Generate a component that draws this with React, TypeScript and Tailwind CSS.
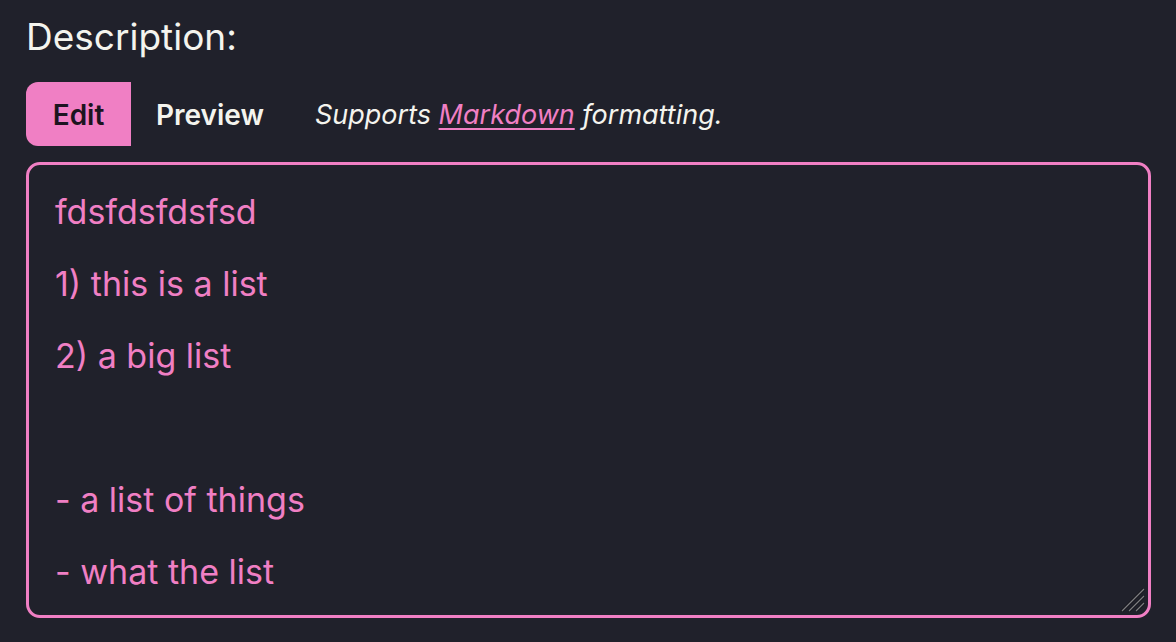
export default function App() {
  const text = "fdsfdsfdsfsd\n\n1) this is a list\n\n2) a big list\n\n\n\n- a list of things\n\n- what the list";
  return (
    <div className="min-h-[642px] w-[1176px] bg-[#20212b] px-[26px] pt-[13px] font-['Inter',sans-serif]">
      <h2 className="text-[37px] leading-[48px] text-[#f4f4ee]">Description:</h2>
      <div className="mt-[21px] flex items-center">
        <button className="h-[64px] w-[105px] rounded-l-[12px] bg-[#f07fc4] pt-[2px] text-[28px] font-semibold text-[#1c1420]">
          Edit
        </button>
        <button className="h-[64px] px-[25px] pt-[2px] text-[28px] font-semibold text-[#f4f4ee]">
          Preview
        </button>
        <p className="ml-[26px] pt-[2px] text-[27px] italic text-[#f4f4ee]">
          Supports{" "}
          <a href="#" className="text-[#f07fc4] underline underline-offset-4">
            Markdown
          </a>{" "}
          formatting.
        </p>
      </div>
      <div className="relative mt-[16px] w-[1125px]">
        <textarea
          readOnly
          defaultValue={text}
          className="block h-[456px] w-full resize-none rounded-[14px] border-[3px] border-[#f07fc4] bg-[#20212b] px-[26px] pt-[29px] text-[34px] leading-[36px] text-[#f07fc4] outline-none"
        />
        <svg className="pointer-events-none absolute bottom-[5px] right-[5px]" width="26" height="26" viewBox="0 0 26 26">
          <path d="M2 24 L24 2 M9 24 L24 9 M16 24 L24 16" stroke="#16161c" strokeWidth="3" />
          <path d="M2 24 L24 2 M9 24 L24 9 M16 24 L24 16" stroke="#7d7d80" strokeWidth="1.2" />
        </svg>
      </div>
    </div>
  );
}
